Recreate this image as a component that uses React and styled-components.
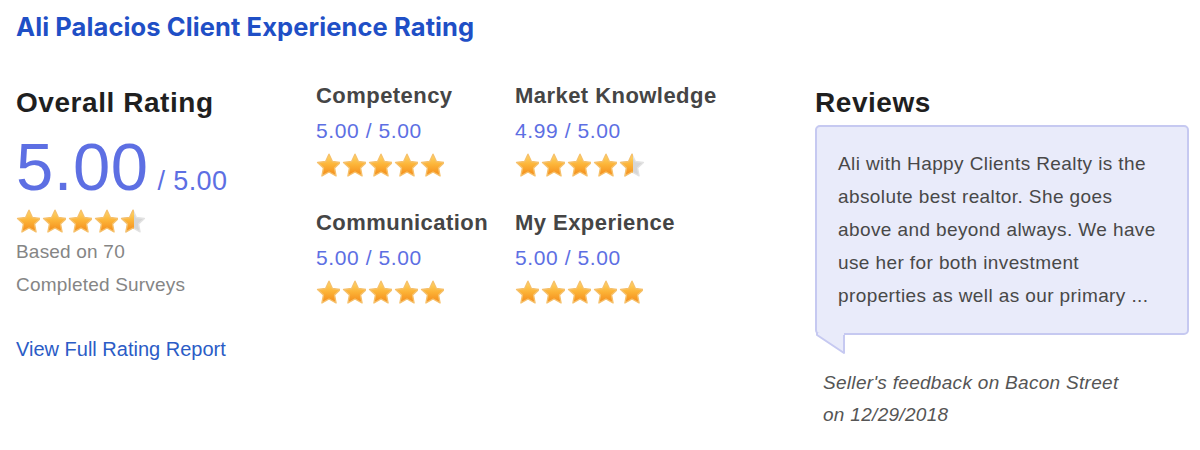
import React from "react";
import styled, { createGlobalStyle } from "styled-components";

const Global = createGlobalStyle`
  html, body { margin: 0; padding: 0; background: #ffffff; }
  body { font-family: "Liberation Sans", Arial, sans-serif; }
`;

const Page = styled.div`
  width: 1200px;
  height: 450px;
  box-sizing: border-box;
  padding: 12px 0 0 16px;
  overflow: hidden;
`;

const Title = styled.h1`
  margin: 0;
  font-family: Inter, "Liberation Sans", sans-serif;
  font-weight: 700;
  font-size: 25.5px;
  line-height: 30px;
  color: #1f4fc6;
  letter-spacing: 0.1px;
`;

const Main = styled.div`
  display: flex;
  align-items: flex-start;
  margin-top: 38px;
`;

const LeftCol = styled.div`
  width: 300px;
  display: flex;
  flex-direction: column;
  align-items: flex-start;
`;

const SectionHeading = styled.h2`
  margin: 6px 0 0;
  font-size: 28px;
  line-height: 34px;
  font-weight: 700;
  color: #1f1f1f;
  letter-spacing: 0.55px;
`;

const BigScore = styled.div`
  display: flex;
  align-items: baseline;
  margin-top: 13px;
  color: #5d6fe3;
`;

const BigNumber = styled.span`
  font-size: 67px;
  line-height: 67px;
  letter-spacing: 0.5px;
`;

const OutOf = styled.span`
  font-size: 27px;
  margin-left: 9px;
  letter-spacing: 0.4px;
`;

const StarRow = styled.div`
  display: flex;
  margin-top: ${(p) => p.$mt || 0}px;
  height: 25px;
`;

const Muted = styled.div`
  margin-top: 1px;
  font-size: 19px;
  line-height: 33px;
  color: #858585;
  letter-spacing: 0.2px;
`;

const Link = styled.a`
  margin-top: 36px;
  font-size: 20px;
  line-height: 24px;
  color: #2b5cc6;
  text-decoration: none;
`;

const Grid = styled.div`
  display: grid;
  grid-template-columns: 199px 199px;
  row-gap: 29px;
  width: 499px;
`;

const Metric = styled.div`
  display: flex;
  flex-direction: column;
  align-items: flex-start;
  padding-top: 3px;
`;

const MetricName = styled.div`
  font-size: 22px;
  line-height: 26px;
  font-weight: 700;
  color: #454545;
  letter-spacing: 0.45px;
  white-space: nowrap;
`;

const MetricScore = styled.div`
  margin-top: 9px;
  font-size: 21px;
  line-height: 26px;
  color: #5d6fe3;
  letter-spacing: 0.6px;
`;

const ReviewsCol = styled.div`
  width: 374px;
  display: flex;
  flex-direction: column;
`;

const Bubble = styled.div`
  position: relative;
  margin-top: 5px;
  box-sizing: border-box;
  width: 374px;
  height: 210px;
  padding: 20px 18px 0 21px;
  background: #e9ebfa;
  border: 2px solid #c6c9f1;
  border-radius: 5px;
  font-size: 19px;
  line-height: 33px;
  letter-spacing: 0.4px;
  color: #484848;
`;

const Tail = styled.svg`
  position: absolute;
  left: -2px;
  top: 206px;
`;

const Caption = styled.div`
  margin-top: 32px;
  padding-left: 8px;
  font-size: 19px;
  line-height: 32px;
  font-style: italic;
  letter-spacing: 0.3px;
  color: #555555;
`;

function starPath(cx, cy, R, r) {
  const pts = [];
  for (let k = 0; k < 10; k++) {
    const a = ((-90 + k * 36) * Math.PI) / 180;
    const rad = k % 2 === 0 ? R : r;
    pts.push(`${(cx + rad * Math.cos(a)).toFixed(2)} ${(cy + rad * Math.sin(a)).toFixed(2)}`);
  }
  return "M" + pts.join(" L") + " Z";
}

const STAR_D = starPath(13, 13.2, 12, 5.8);

let starId = 0;
function Star({ fill = 1 }) {
  const id = React.useMemo(() => `s${starId++}`, []);
  return (
    <svg width="26" height="25" viewBox="0 0 26 25">
      <defs>
        <linearGradient id={`g${id}`} x1="0" y1="0" x2="0" y2="1">
          <stop offset="0" stopColor="#ffd868" />
          <stop offset="0.5" stopColor="#fcb236" />
          <stop offset="1" stopColor="#f38a1a" />
        </linearGradient>
        <clipPath id={`c${id}`}>
          <rect x="0" y="0" width={2 + 22 * fill} height="25" />
        </clipPath>
      </defs>
      {fill < 1 && (
        <path d={STAR_D} fill="#d6d6d6" stroke="#e2e2e2" strokeWidth="1.4" strokeLinejoin="round" />
      )}
      <g clipPath={`url(#c${id})`}>
        <path
          d={STAR_D}
          fill={`url(#g${id})`}
          stroke="#f6c06a"
          strokeWidth="1.4"
          strokeLinejoin="round"
        />
      </g>
    </svg>
  );
}

function Stars({ value, mt }) {
  return (
    <StarRow $mt={mt}>
      {[0, 1, 2, 3, 4].map((i) => (
        <Star key={i} fill={Math.max(0, Math.min(1, value - i))} />
      ))}
    </StarRow>
  );
}

const metrics = [
  { name: "Competency", score: "5.00", stars: 5 },
  { name: "Market Knowledge", score: "4.99", stars: 4.55 },
  { name: "Communication", score: "5.00", stars: 5 },
  { name: "My Experience", score: "5.00", stars: 5 },
];

export default function App() {
  return (
    <Page>
      <Global />
      <Title>Ali Palacios Client Experience Rating</Title>
      <Main>
        <LeftCol>
          <SectionHeading>Overall Rating</SectionHeading>
          <BigScore>
            <BigNumber>5.00</BigNumber>
            <OutOf>/ 5.00</OutOf>
          </BigScore>
          <Stars value={4.55} mt={9} />
          <Muted>
            Based on 70
            <br />
            Completed Surveys
          </Muted>
          <Link href="#">View Full Rating Report</Link>
        </LeftCol>
        <Grid>
          {metrics.map((m) => (
            <Metric key={m.name}>
              <MetricName>{m.name}</MetricName>
              <MetricScore>{m.score} / 5.00</MetricScore>
              <Stars value={m.stars} mt={9} />
            </Metric>
          ))}
        </Grid>
        <ReviewsCol>
          <SectionHeading>Reviews</SectionHeading>
          <Bubble>
            Ali with Happy Clients Realty is the absolute best realtor. She goes
            above and beyond always. We have use her for both investment
            properties as well as our primary ...
            <Tail width="32" height="22" viewBox="0 0 32 22">
              <path d="M2 0 L2 2 L29 20 L29 0 Z" fill="#e9ebfa" />
              <path d="M2 0 L2 2 L29 20 L29 2" fill="none" stroke="#c6c9f1" strokeWidth="2" strokeLinejoin="round" />
            </Tail>
          </Bubble>
          <Caption>
            Seller's feedback on Bacon Street
            <br />
            on 12/29/2018
          </Caption>
        </ReviewsCol>
      </Main>
    </Page>
  );
}
